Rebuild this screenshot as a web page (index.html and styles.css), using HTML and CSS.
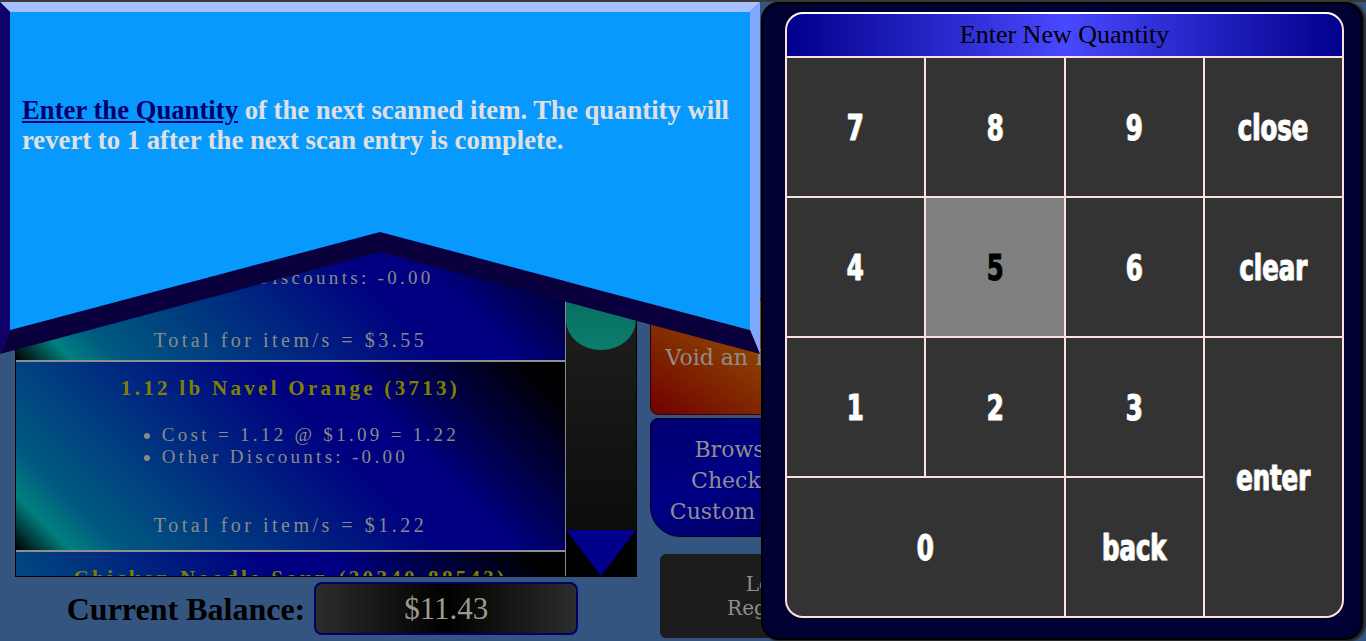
FILE: index.html
```html
<!DOCTYPE html>
<html lang="en">
<head>
<meta charset="utf-8">
<title>Register - Enter Quantity</title>
<link rel="stylesheet" href="styles.css">
</head>
<body>
<div class="topstrip"></div>
<main class="main">
  <section class="left">
    <div class="receipt">
      <div class="items">
        <div class="item item-first">
          <div class="item-title">3 Bananas (4011)</div>
          <ul class="item-lines">
            <li>Cost = $3.55</li>
            <li>Other Discounts: -0.00</li>
          </ul>
          <div class="item-total item-total-first">Total for item/s = $3.55</div>
        </div>
        <div class="item">
          <div class="item-title">1.12 lb Navel Orange (3713)</div>
          <ul class="item-lines">
            <li>Cost = 1.12 @ $1.09 = 1.22</li>
            <li>Other Discounts: -0.00</li>
          </ul>
          <div class="item-total">Total for item/s = $1.22</div>
        </div>
        <div class="item">
          <div class="item-title">Chicken Noodle Soup (20340-88543)</div>
          <ul class="item-lines">
            <li>Cost = 1 @ $2.49 = 2.49</li>
            <li>Other Discounts: -0.00</li>
          </ul>
          <div class="item-total">Total for item/s = $2.49</div>
        </div>
      </div>
      <div class="scroll">
        <div class="scroll-track"><div class="scroll-thumb"></div></div>
        <div class="scroll-down">
          <svg width="70" height="46" viewBox="0 0 70 46"><polygon points="0,0 70,0 35,46" fill="#00008c"/></svg>
        </div>
      </div>
    </div>
    <div class="balance">
      <span class="balance-label">Current Balance:</span>
      <div class="balance-box">$11.43</div>
    </div>
  </section>
  <section class="actions">
    <button class="btn btn-void">Void an Item</button>
    <button class="btn btn-browse">Browse<br>Check a<br>Custom Tab</button>
    <button class="btn btn-lock">Lock<br>Register</button>
  </section>
</main>

<div class="banner">
  <svg class="banner-art" width="760" height="360" viewBox="0 0 760 360">
    <polygon points="0,2 760,2 750,12 10,12" fill="#a8c0ff"/>
    <polygon points="0,2 10,12 10,330 0,354" fill="#10006a"/>
    <polygon points="760,2 760,354 750,330 750,12" fill="#80a8ff"/>
    <polygon points="0,354 10,330 380,232 750,330 760,354 380,252" fill="#09003d"/>
    <polygon points="10,12 750,12 750,330 380,232 10,330" fill="#0899ff"/>
  </svg>
  <p class="banner-text"><span class="banner-em">Enter the Quantity</span> of the next scanned item. The quantity will revert to 1 after the next scan entry is complete.</p>
</div>

<div class="panel">
  <div class="keypad">
    <div class="keypad-head">Enter New Quantity</div>
    <div class="keys">
      <div class="key"><span>7</span></div>
      <div class="key"><span>8</span></div>
      <div class="key"><span>9</span></div>
      <div class="key"><span>close</span></div>
      <div class="key"><span>4</span></div>
      <div class="key key-active"><span>5</span></div>
      <div class="key"><span>6</span></div>
      <div class="key"><span>clear</span></div>
      <div class="key"><span>1</span></div>
      <div class="key"><span>2</span></div>
      <div class="key"><span>3</span></div>
      <div class="key key-enter"><span>enter</span></div>
      <div class="key key-zero"><span>0</span></div>
      <div class="key"><span>back</span></div>
    </div>
  </div>
</div>
</body>
</html>
```

FILE: styles.css
```css
* { box-sizing: border-box; }
html, body { margin: 0; padding: 0; }
body {
  width: 1366px;
  height: 641px;
  overflow: hidden;
  position: relative;
  background: #34557f;
  font-family: "Liberation Serif", "Times New Roman", serif;
}
.topstrip { height: 2px; background: #3a3a3a; }

.main {
  display: flex;
  gap: 13px;
  padding: 167px 0 0 15px;
}
.left {
  width: 622px;
  display: flex;
  flex-direction: column;
}
.receipt {
  height: 408px;
  display: flex;
  border: 1px solid #000;
}
.items {
  flex: 1;
  overflow: hidden;
  display: flex;
  flex-direction: column;
}
.item {
  flex-shrink: 0;
  height: 190px;
  display: flex;
  flex-direction: column;
  align-items: center;
  padding: 12px 0;
  border-bottom: 2px solid #8f8f8f;
  background: linear-gradient(45deg, #000 0%, #008080 7.5%, #005a80 14%, #000080 58%, #000080 68%, #000 95%);
  text-align: center;
  white-space: nowrap;
}
.item-first {
  height: 192px;
  justify-content: flex-end;
  padding: 0 0 7px;
}
.item-title {
  font-weight: bold;
  font-size: 21px;
  line-height: 28px;
  letter-spacing: 3.3px;
  color: #808000;
}
.item-lines {
  margin: 22px 0 0;
  padding-left: 40px;
  text-align: left;
  color: #8a8a8a;
  font-size: 19px;
  line-height: 22px;
  letter-spacing: 3.3px;
}
.item-total {
  margin-top: 44px;
  font-size: 20px;
  line-height: 26px;
  letter-spacing: 3.5px;
  color: #8a8a8a;
}
.item-total-first { margin-top: 38px; }

.scroll {
  width: 71px;
  border-left: 1px solid #8a8a8a;
  display: flex;
  flex-direction: column;
}
.scroll-track {
  flex: 1;
  background: linear-gradient(#2a2a2a, #0c0c0c);
}
.scroll-thumb {
  height: 180px;
  background: linear-gradient(#0a4a48, #0a7d6c);
  border-radius: 0 0 35px 35px / 0 0 30px 30px;
}
.scroll-down {
  height: 46px;
  background: #000;
  display: flex;
}

.balance {
  display: flex;
  justify-content: center;
  align-items: center;
  gap: 9px;
  margin-top: 5px;
  padding-right: 7px;
  height: 53px;
}
.balance-label {
  font-weight: bold;
  font-size: 32px;
  line-height: 1;
  color: #000;
}
.balance-box {
  width: 264px;
  height: 53px;
  border: 2px solid #00006a;
  border-radius: 8px;
  background: linear-gradient(to right, #2c2c2c 0%, #000 50%, #2c2c2c 100%);
  color: #9c9c8c;
  font-size: 31px;
  display: flex;
  align-items: center;
  justify-content: center;
}

.actions {
  width: 230px;
  display: flex;
  flex-direction: column;
  align-items: flex-start;
  padding-top: 130px;
}
.btn {
  font-family: "DejaVu Serif", serif;
  color: #8e8e8e;
  text-align: center;
  padding: 0;
  margin: 0;
  white-space: nowrap;
  cursor: pointer;
}
.btn-void {
  width: 172px;
  height: 116px;
  font-size: 22px;
  border: 1px solid #3a0000;
  border-radius: 0 0 0 8px;
  background: linear-gradient(to top right, #700000 0%, #8e4400 60%, #8a5c00 100%);
}
.btn-browse {
  width: 172px;
  height: 119px;
  margin-top: 3px;
  padding-top: 5px;
  font-size: 22px;
  line-height: 31px;
  border: 1px solid #000020;
  border-radius: 8px 0 0 30px;
  background: linear-gradient(160deg, #000070 0%, #000085 50%, #000058 100%);
}
.btn-lock {
  width: 220px;
  height: 84px;
  margin: 17px 0 0 10px;
  font-size: 20px;
  line-height: 24px;
  border: none;
  border-radius: 6px;
  background: #1c1c1c;
}

.banner {
  position: absolute;
  left: 0;
  top: 0;
  width: 760px;
  height: 360px;
}
.banner-art { position: absolute; left: 0; top: 0; }
.banner-text {
  position: absolute;
  left: 22px;
  top: 95px;
  width: 722px;
  margin: 0;
  font-weight: bold;
  font-size: 26.7px;
  line-height: 30px;
  color: #e0e0e0;
}
.banner-em {
  color: #00006a;
  text-decoration: underline;
}

.panel {
  position: absolute;
  left: 761px;
  top: 2px;
  width: 602px;
  height: 638px;
  padding: 8px 0 0 22px;
  background: #000033;
  border: 2px solid #000;
  border-radius: 18px;
  box-shadow: 2px 1px 2px 1px #262626;
}
.keypad {
  width: 559px;
  height: 606px;
  border: 2px solid #fde0e0;
  border-top-color: #fff;
  border-radius: 18px;
  overflow: hidden;
  background: #fde0e0;
  display: flex;
  flex-direction: column;
  gap: 2px;
}
.keypad-head {
  height: 42px;
  flex-shrink: 0;
  background: linear-gradient(to right, #00008b 0%, #4848ff 50%, #00008b 100%);
  color: #000;
  font-size: 26px;
  display: flex;
  align-items: center;
  justify-content: center;
}
.keys {
  display: grid;
  grid-template-columns: repeat(4, 1fr);
  grid-template-rows: repeat(4, 138px);
  gap: 2px;
}
.key {
  display: flex;
  align-items: center;
  justify-content: center;
  background: #333;
  color: #fff;
  font-family: "DejaVu Sans Condensed", "DejaVu Sans", sans-serif;
  font-stretch: condensed;
  font-weight: bold;
  font-size: 33px;
  -webkit-text-stroke: 0.9px #fff;
  text-shadow: -1px 0 rgba(80, 170, 255, 0.55), 1px 0 rgba(255, 170, 60, 0.55);
}
.key span { display: inline-block; transform: scale(0.82, 1.08); }
.key-active { background: #808080; color: #000; -webkit-text-stroke: 0.9px #000; text-shadow: none; }
.key-enter { grid-row: 3 / span 2; grid-column: 4; }
.key-zero { grid-column: 1 / span 2; }
```
